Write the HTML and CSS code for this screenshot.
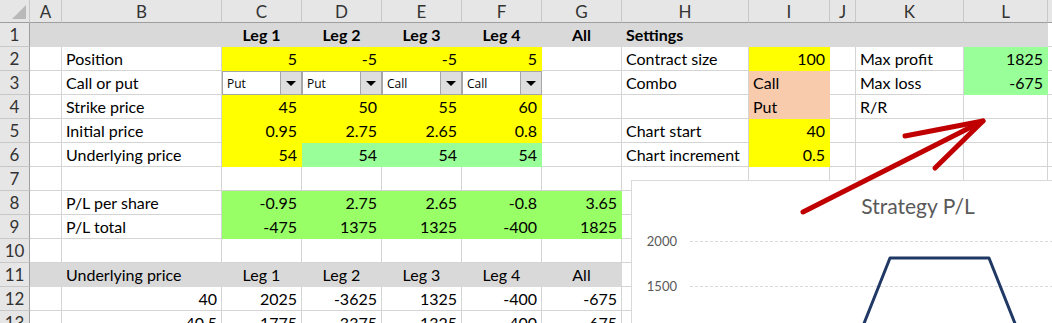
FILE: index.html
```html
<html>
<head>
<meta charset="utf-8">
<link rel="stylesheet" href="styles.css">
</head>
<body>

<div class="sheet">
    <!-- column headers -->
    <div class="ch corner"></div>
    <div class="ch">A</div><div class="ch">B</div><div class="ch">C</div><div class="ch">D</div>
    <div class="ch">E</div><div class="ch">F</div><div class="ch">G</div><div class="ch">H</div>
    <div class="ch">I</div><div class="ch">J</div><div class="ch">K</div><div class="ch">L</div><div class="ch"></div>

    <!-- 1 -->
    <div class="rh">1</div>
    <div class="c gr"></div><div class="c gr"></div>
    <div class="c gr ctr b">Leg 1</div><div class="c gr ctr b">Leg 2</div><div class="c gr ctr b">Leg 3</div><div class="c gr ctr b">Leg 4</div>
    <div class="c gr ctr b">All</div><div class="c gr b">Settings</div>
    <div class="c gr"></div><div class="c gr"></div><div class="c gr"></div><div class="c gr"></div><div class="c"></div>

    <!-- 2 -->
    <div class="rh">2</div>
    <div class="c"></div><div class="c">Position</div>
    <div class="c y r">5</div><div class="c y r">-5</div><div class="c y r">-5</div><div class="c y r">5</div>
    <div class="c"></div><div class="c">Contract size</div><div class="c y r">100</div><div class="c"></div>
    <div class="c">Max profit</div><div class="c g r">1825</div><div class="c"></div>

    <!-- 3 -->
    <div class="rh">3</div>
    <div class="c"></div><div class="c">Call or put</div>
    <div class="c dd"><span>Put</span><i class="btn"></i></div>
    <div class="c dd"><span>Put</span><i class="btn"></i></div>
    <div class="c dd"><span>Call</span><i class="btn"></i></div>
    <div class="c dd"><span>Call</span><i class="btn"></i></div>
    <div class="c"></div><div class="c">Combo</div><div class="c p">Call</div><div class="c"></div>
    <div class="c">Max loss</div><div class="c g r">-675</div><div class="c"></div>

    <!-- 4 -->
    <div class="rh">4</div>
    <div class="c"></div><div class="c">Strike price</div>
    <div class="c y r">45</div><div class="c y r">50</div><div class="c y r">55</div><div class="c y r">60</div>
    <div class="c"></div><div class="c"></div><div class="c p">Put</div><div class="c"></div>
    <div class="c">R/R</div><div class="c"></div><div class="c"></div>

    <!-- 5 -->
    <div class="rh">5</div>
    <div class="c"></div><div class="c">Initial price</div>
    <div class="c y r">0.95</div><div class="c y r">2.75</div><div class="c y r">2.65</div><div class="c y r">0.8</div>
    <div class="c"></div><div class="c">Chart start</div><div class="c y r">40</div><div class="c"></div>
    <div class="c"></div><div class="c"></div><div class="c"></div>

    <!-- 6 -->
    <div class="rh">6</div>
    <div class="c"></div><div class="c">Underlying price</div>
    <div class="c y r">54</div><div class="c g r">54</div><div class="c g r">54</div><div class="c g r">54</div>
    <div class="c"></div><div class="c">Chart increment</div><div class="c y r">0.5</div><div class="c"></div>
    <div class="c"></div><div class="c"></div><div class="c"></div>

    <!-- 7 -->
    <div class="rh">7</div>
    <div class="c"></div><div class="c"></div><div class="c"></div><div class="c"></div><div class="c"></div><div class="c"></div>
    <div class="c"></div><div class="c"></div><div class="c"></div><div class="c"></div><div class="c"></div><div class="c"></div><div class="c"></div>

    <!-- 8 -->
    <div class="rh">8</div>
    <div class="c"></div><div class="c">P/L per share</div>
    <div class="c lg r">-0.95</div><div class="c lg r">2.75</div><div class="c lg r">2.65</div><div class="c lg r">-0.8</div><div class="c lg r">3.65</div>
    <div class="c"></div><div class="c"></div><div class="c"></div><div class="c"></div><div class="c"></div><div class="c"></div>

    <!-- 9 -->
    <div class="rh">9</div>
    <div class="c"></div><div class="c">P/L total</div>
    <div class="c lg r">-475</div><div class="c lg r">1375</div><div class="c lg r">1325</div><div class="c lg r">-400</div><div class="c lg r">1825</div>
    <div class="c"></div><div class="c"></div><div class="c"></div><div class="c"></div><div class="c"></div><div class="c"></div>

    <!-- 10 -->
    <div class="rh">10</div>
    <div class="c"></div><div class="c"></div><div class="c"></div><div class="c"></div><div class="c"></div><div class="c"></div>
    <div class="c"></div><div class="c"></div><div class="c"></div><div class="c"></div><div class="c"></div><div class="c"></div><div class="c"></div>

    <!-- 11 -->
    <div class="rh">11</div>
    <div class="c gr"></div><div class="c gr">Underlying price</div>
    <div class="c gr ctr">Leg 1</div><div class="c gr ctr">Leg 2</div><div class="c gr ctr">Leg 3</div><div class="c gr ctr">Leg 4</div><div class="c gr ctr">All</div>
    <div class="c"></div><div class="c"></div><div class="c"></div><div class="c"></div><div class="c"></div><div class="c"></div>

    <!-- 12 -->
    <div class="rh">12</div>
    <div class="c"></div><div class="c r">40</div>
    <div class="c r">2025</div><div class="c r">-3625</div><div class="c r">1325</div><div class="c r">-400</div><div class="c r">-675</div>
    <div class="c"></div><div class="c"></div><div class="c"></div><div class="c"></div><div class="c"></div><div class="c"></div>

    <!-- 13 -->
    <div class="rh">13</div>
    <div class="c"></div><div class="c r">40.5</div>
    <div class="c r">1775</div><div class="c r">-3375</div><div class="c r">1325</div><div class="c r">-400</div><div class="c r">-675</div>
    <div class="c"></div><div class="c"></div><div class="c"></div><div class="c"></div><div class="c"></div><div class="c"></div>
</div>

<!-- floating chart object -->
<div class="chart">
    <svg width="430" height="150">
        <text x="286" y="33" class="title" text-anchor="middle">Strategy P/L</text>
        <line x1="58" y1="60.5" x2="430" y2="60.5" class="grid"/>
        <line x1="58" y1="105.5" x2="430" y2="105.5" class="grid"/>
        <text x="45" y="65" class="axis" text-anchor="end">2000</text>
        <text x="45" y="110" class="axis" text-anchor="end">1500</text>
        <polyline points="229,150 258,77 357,77 386,150" class="pl"/>
    </svg>
</div>

<!-- hand drawn arrow on top -->
<svg class="arrow" width="1052" height="323">
    <polyline points="803,212 983,121" />
    <polyline points="905,136 983,121 935,168" />
</svg>

</body>
</html>
```

FILE: styles.css
```css
body {
    margin: 0;
    overflow: hidden;
    background: #fff;
    font-family: Lato, "Liberation Sans", sans-serif;
    font-size: 16px;
    color: #000;
}

.sheet {
    display: grid;
    grid-template-columns: 30px 32px 160px 80px 80px 80px 80px 80px 127px 81px 26px 108px 84px 1fr;
    grid-template-rows: 23px;
    grid-auto-rows: 24px;
}

.sheet > div {
    box-sizing: border-box;
    white-space: nowrap;
    overflow: hidden;
}

/* headers */
.ch {
    background: #e6e6e6;
    border-right: 1px solid #c8c8c8;
    border-bottom: 1px solid #9e9e9e;
    text-align: center;
    line-height: 23px;
    color: #333;
    font-size: 17px;
}

.corner {
    position: relative;
}

.corner:after {
    content: "";
    position: absolute;
    left: 12px;
    top: 5px;
    width: 14px;
    height: 14px;
    background: #b9b9b9;
    clip-path: polygon(100% 0, 100% 100%, 0 100%);
}

.rh {
    background: #e6e6e6;
    border-right: 1px solid #9e9e9e;
    border-bottom: 1px solid #c8c8c8;
    text-align: center;
    line-height: 24px;
    color: #333;
    font-size: 17px;
}

/* cells */
.c {
    border-right: 1px solid #d4d4d4;
    border-bottom: 1px solid #d4d4d4;
    padding: 0 4px;
    line-height: 24px;
}

.r { text-align: right; }
.ctr { text-align: center; }
.b { font-weight: bold; }

.y, .g, .lg, .p, .gr {
    border-color: transparent;
}

.y { background: #ffff00; }
.g { background: #99ff99; }
.lg { background: #99ff66; }
.p { background: #f8cbad; }
.gr { background: #d9d9d9; }

/* dropdowns in row 3 */
.dd {
    display: flex;
    align-items: stretch;
    padding: 0;
    border-top: 1px solid #a6a6a6;
    border-bottom: 1px solid #a6a6a6;
    border-left: 1px solid #a6a6a6;
    border-right: none;
}

.dd span {
    flex: 1;
    padding-left: 4px;
    font-family: "Open Sans", sans-serif;
    font-size: 12px;
    line-height: 23px;
}

.btn {
    width: 20px;
    background: #dedede;
    border-left: 1px solid #a6a6a6;
    border-right: 1px solid #a6a6a6;
    display: flex;
    align-items: center;
    justify-content: center;
}

.btn:before {
    content: "";
    border-left: 5px solid transparent;
    border-right: 5px solid transparent;
    border-top: 5px solid #000;
}

/* chart */
.chart {
    position: absolute;
    left: 631px;
    top: 180px;
    width: 430px;
    height: 150px;
    background: #fff;
    border: 1px solid #d9d9d9;
}

.chart svg {
    display: block;
}

.title {
    font-family: Lato, sans-serif;
    font-size: 21px;
    fill: #595959;
}

.axis {
    font-family: Lato, sans-serif;
    font-size: 13px;
    fill: #595959;
}

.grid {
    stroke: #d9d9d9;
    stroke-width: 1;
    stroke-dasharray: 3 2;
}

.pl {
    fill: none;
    stroke: #203864;
    stroke-width: 3;
    stroke-linejoin: round;
}

.arrow {
    position: absolute;
    left: 0;
    top: 0;
    pointer-events: none;
}

.arrow polyline {
    fill: none;
    stroke: #c00000;
    stroke-width: 5;
    stroke-linecap: round;
    stroke-linejoin: round;
}
```
